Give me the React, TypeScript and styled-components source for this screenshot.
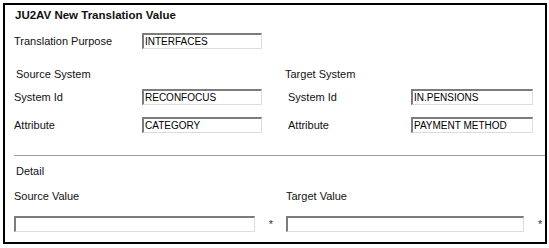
import styled, { createGlobalStyle } from "styled-components"

const Global = createGlobalStyle`
    body {
        margin: 0;
        background: #ffffff;
        font-family: "Liberation Sans", Arial, sans-serif;
        color: #111;
    }
`

const Panel = styled.div`
    box-sizing: border-box;
    width: 544px;
    height: 241px;
    margin: 3px 0 0 3px;
    border: 2px solid #000;
    padding: 3px 0 0 9px;
    display: flex;
    flex-direction: column;
`

const Title = styled.div`
    font-size: 11.5px;
    font-weight: bold;
    line-height: 15px;
    padding-left: 1px;
`

const Row = styled.div<{ $top: number }>`
    display: grid;
    grid-template-columns: 128px 120px 26px 123px 122px;
    align-items: center;
    height: 16px;
    margin-top: ${p => p.$top}px;
`

const Label = styled.span<{ $shift?: number }>`
    font-size: 11px;
    line-height: 14px;
    white-space: nowrap;
    margin-left: ${p => p.$shift ?? 0}px;
`

const Heading = styled.div<{ $top: number }>`
    display: grid;
    grid-template-columns: 274px 200px;
    height: 14px;
    margin-top: ${p => p.$top}px;
`

const Field = styled.div<{ $width?: number }>`
    box-sizing: border-box;
    width: ${p => (p.$width ? `${p.$width}px` : "100%")};
    height: 16px;
    border-style: solid;
    border-width: 2px 1px 1px 2px;
    border-color: #7c7c7c #dcdcdc #dcdcdc #7c7c7c;
    background: #fff;
    font-size: 10px;
    line-height: 13px;
    padding-left: 1px;
    color: #000;
    white-space: nowrap;
    overflow: hidden;
`

const Divider = styled.hr`
    margin: 22px 0 0 0;
    border: none;
    border-top: 1px solid #9c9c9c;
    height: 0;
`

const ValueRow = styled.div<{ $top: number }>`
    display: grid;
    grid-template-columns: 242px 30px 238px 21px;
    align-items: center;
    margin-top: ${p => p.$top}px;
`

const Star = styled.span<{ $pad?: number }>`
    font-size: 11px;
    color: #333;
    line-height: 16px;
    text-align: ${p => (p.$pad ? "left" : "center")};
    padding-left: ${p => p.$pad ?? 0}px;
    padding-top: 1px;
`

export default function App() {
    return (
        <>
            <Global />
            <Panel>
                <Title>JU2AV New Translation Value</Title>
                <Row $top={10}>
                    <Label>Translation Purpose</Label>
                    <Field>INTERFACES</Field>
                </Row>
                <Heading $top={18}>
                    <Label $shift={2}>Source System</Label>
                    <Label $shift={-3}>Target System</Label>
                </Heading>
                <Row $top={8}>
                    <Label>System Id</Label>
                    <Field>RECONFOCUS</Field>
                    <span />
                    <Label>System Id</Label>
                    <Field>IN.PENSIONS</Field>
                </Row>
                <Row $top={12}>
                    <Label>Attribute</Label>
                    <Field>CATEGORY</Field>
                    <span />
                    <Label>Attribute</Label>
                    <Field>PAYMENT METHOD</Field>
                </Row>
                <Divider />
                <Heading $top={8}>
                    <Label $shift={2}>Detail</Label>
                </Heading>
                <ValueRow $top={11}>
                    <Label>Source Value</Label>
                    <span />
                    <Label>Target Value</Label>
                </ValueRow>
                <ValueRow $top={12}>
                    <Field $width={241} />
                    <Star>*</Star>
                    <Field />
                    <Star $pad={14}>*</Star>
                </ValueRow>
            </Panel>
        </>
    )
}
